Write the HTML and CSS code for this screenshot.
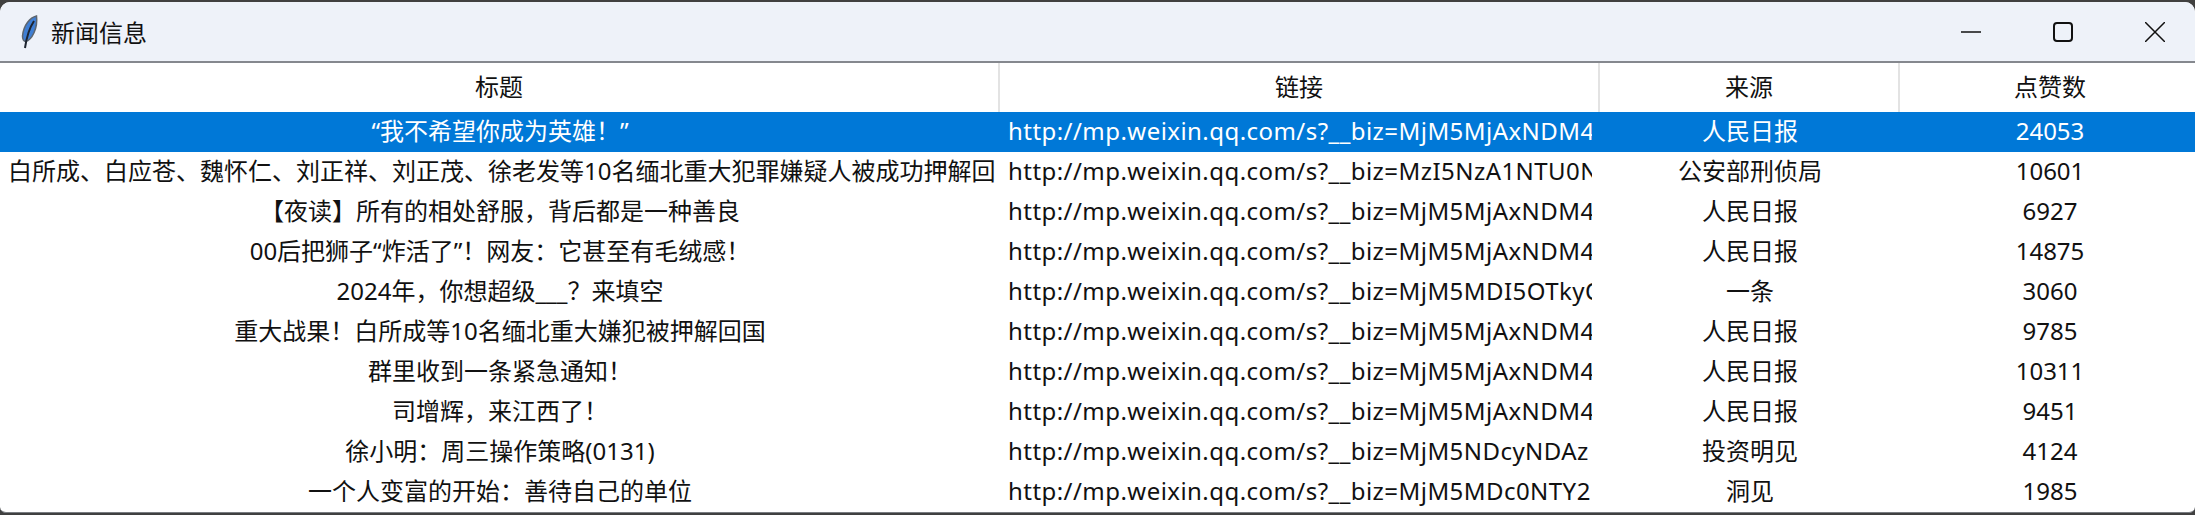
FILE: index.html
```html
<!DOCTYPE html>
<html lang="zh">
<head>
    <meta charset="UTF-8">
    <title>新闻信息</title>
<link rel="stylesheet" href="styles.css">
</head>
<body>
	<main class="window">
		<header class="titlebar">
			<svg class="feather" viewBox="0 0 18 34" width="18" height="34">
				<path d="M15.500 1C9 2.500 2.500 10 1.500 21c0 3 1 5 3 5.500C11 25 17 13 15.500 1z" fill="#3f7fd4" stroke="#5d6670" stroke-width="1.500"/>
				<path d="M13 6C9 12 6 19 4 33" fill="none" stroke="#1d2430" stroke-width="2"/>
			</svg>
			<span class="titlebar-text">新闻信息</span>
			<div class="controls">
				<svg viewBox="0 0 20 20" width="20" height="20"><path d="M0 10h20" stroke="#111" stroke-width="1.500"/></svg>
				<svg viewBox="0 0 20 20" width="20" height="20"><rect x="1" y="1" width="18" height="18" rx="3" fill="none" stroke="#111" stroke-width="2"/></svg>
				<svg viewBox="0 0 20 20" width="20" height="20"><path d="M0 0l20 20M20 0L0 20" stroke="#111" stroke-width="1.500"/></svg>
			</div>
		</header>
		<div class="news-table">
			<div class="news-head">
				<div>标题</div><div>链接</div><div>来源</div><div>点赞数</div>
			</div>
			<div class="news-row selected">
				<div>“我不希望你成为英雄！”</div><div class="link">http://mp.weixin.qq.com/s?__biz=MjM5MjAxNDM4</div><div>人民日报</div><div>24053</div>
			</div>
			<div class="news-row">
				<div>白所成、白应苍、魏怀仁、刘正祥、刘正茂、徐老发等10名缅北重大犯罪嫌疑人被成功押解回</div><div class="link">http://mp.weixin.qq.com/s?__biz=MzI5NzA1NTU0N</div><div>公安部刑侦局</div><div>10601</div>
			</div>
			<div class="news-row">
				<div>【夜读】所有的相处舒服，背后都是一种善良</div><div class="link">http://mp.weixin.qq.com/s?__biz=MjM5MjAxNDM4</div><div>人民日报</div><div>6927</div>
			</div>
			<div class="news-row">
				<div>00后把狮子“炸活了”！网友：它甚至有毛绒感！</div><div class="link">http://mp.weixin.qq.com/s?__biz=MjM5MjAxNDM4</div><div>人民日报</div><div>14875</div>
			</div>
			<div class="news-row">
				<div>2024年，你想超级___？来填空</div><div class="link">http://mp.weixin.qq.com/s?__biz=MjM5MDI5OTkyO</div><div>一条</div><div>3060</div>
			</div>
			<div class="news-row">
				<div>重大战果！白所成等10名缅北重大嫌犯被押解回国</div><div class="link">http://mp.weixin.qq.com/s?__biz=MjM5MjAxNDM4</div><div>人民日报</div><div>9785</div>
			</div>
			<div class="news-row">
				<div>群里收到一条紧急通知！</div><div class="link">http://mp.weixin.qq.com/s?__biz=MjM5MjAxNDM4</div><div>人民日报</div><div>10311</div>
			</div>
			<div class="news-row">
				<div>司增辉，来江西了！</div><div class="link">http://mp.weixin.qq.com/s?__biz=MjM5MjAxNDM4</div><div>人民日报</div><div>9451</div>
			</div>
			<div class="news-row">
				<div>徐小明：周三操作策略(0131)</div><div class="link">http://mp.weixin.qq.com/s?__biz=MjM5NDcyNDAz</div><div>投资明见</div><div>4124</div>
			</div>
			<div class="news-row">
				<div>一个人变富的开始：善待自己的单位</div><div class="link">http://mp.weixin.qq.com/s?__biz=MjM5MDc0NTY2</div><div>洞见</div><div>1985</div>
			</div>
		</div>
	</main>
</body>
</html>
```
FILE: styles.css
```css
*{padding:0;margin:0;box-sizing:border-box;}
html,body{height:100%;overflow:hidden;}
body{
	background:#404040;
	padding-top:2px;
	font-family:"Noto Sans","Noto Sans CJK SC",sans-serif;
	font-size:24px;
	color:#111;
}
.window{
	height:511px;
	background:#fff;
	border-bottom:1px solid #7a7d82;
	border-radius:10px 10px 6px 6px;
	overflow:hidden;
}
.titlebar{
	height:61px;
	background:#eef2f9;
	border-bottom:2px solid #85888e;
	display:flex;
	align-items:center;
	padding-left:21px;
}
.feather{margin-right:12px;}
.titlebar-text{font-size:24px;}
.controls{
	margin-left:auto;
	display:flex;
	gap:72px;
	padding-right:30px;
}
.news-head,.news-row{
	display:grid;
	grid-template-columns:1000px 600px 300px 300px;
	text-align:center;
	white-space:nowrap;
}
.news-head{height:49px;align-items:center;}
.news-head>div{height:100%;line-height:48px;border-right:2px solid #e3e3e3;}
.news-head>div:last-child{border-right:none;}
.news-row{height:40px;line-height:38px;}
.news-row>div{overflow:hidden;padding:0 8px;}
.news-row>.link{text-align:left;margin:0 8px;padding:0;letter-spacing:.45px;}
.selected{background:#0078d7;color:#fff;}
```
